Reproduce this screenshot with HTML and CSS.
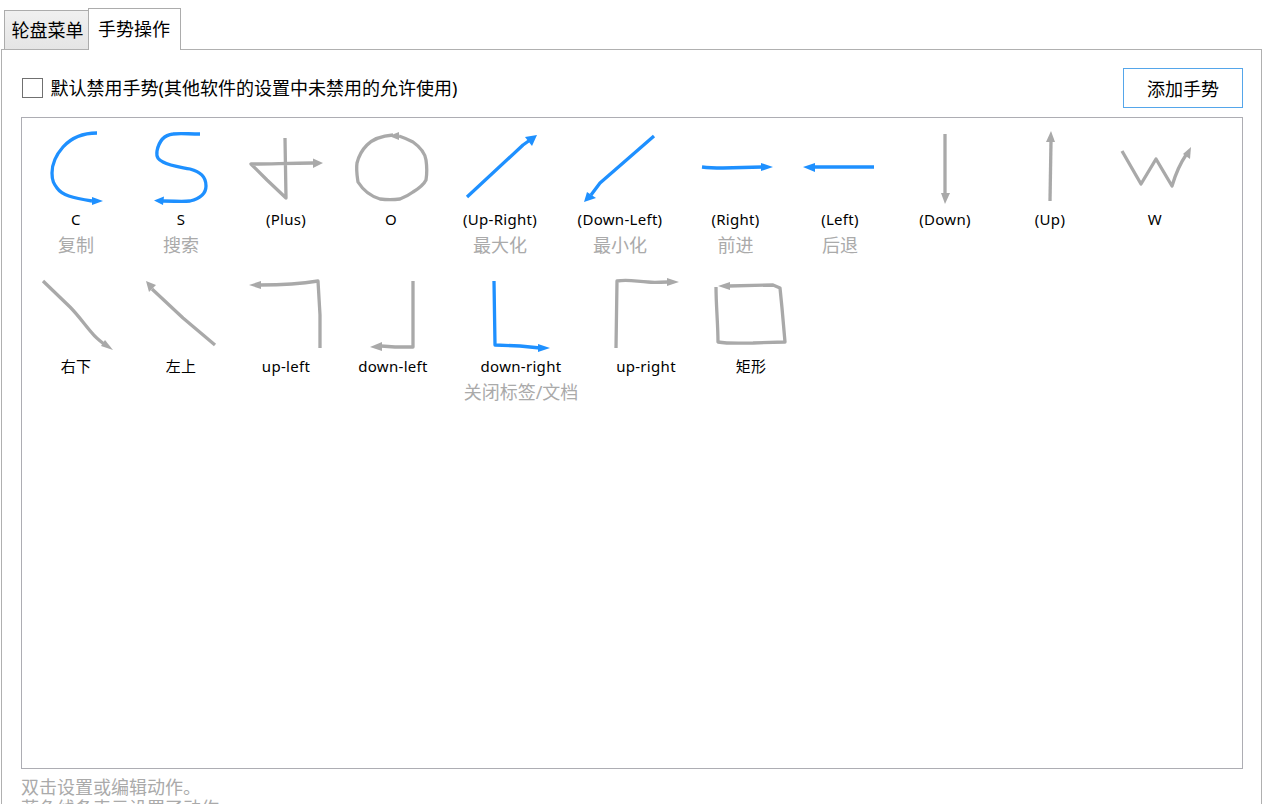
FILE: index.html
```html
<!DOCTYPE html>
<html lang="zh-CN">
<head>
  <meta charset="UTF-8" />
  <title>手势操作</title>
  <link rel="stylesheet" href="styles.css">
</head>
<body>
  <div class="tabs">
    <div class="tab">轮盘菜单</div>
    <div class="tab active">手势操作</div>
  </div>

  <div class="panel">
    <div class="toolbar">
      <label class="check"><input type="checkbox" />默认禁用手势(其他软件的设置中未禁用的允许使用)</label>
      <button class="add-btn">添加手势</button>
    </div>

    <div class="gesture-list">
      <!-- row 1 -->
      <div class="gesture">
        <svg class="stroke on" viewBox="26 124 100 84"><path d="M97 133C84 133 72 137 63 147C56 155 52 165 52 173C52 181 54 184 57 188C62 195 72 198 92 201"/><polygon points="103,201 92,197 92,205"/></svg>
        <div class="name">C</div><div class="action">复制</div>
      </div>
      <div class="gesture">
        <svg class="stroke on" viewBox="131 124 100 84"><path d="M200 134C188 134 180 133 173 134C164 135 159 141 157 151C156 158 159 160 163 162C170 166 180 167 190 169C200 172 206 176 206 186C206 193 202 198 190 201C182 202 175 201 163 201"/><polygon points="154,200.5 164,196.5 163,205"/></svg>
        <div class="name">S</div><div class="action">搜索</div>
      </div>
      <div class="gesture">
        <svg class="stroke" viewBox="236 124 100 84"><path d="M285 138L286 198L267 180L251 164C270 164 290 163 313 163"/><polygon points="323,163 313,158.5 313,168"/></svg>
        <div class="name">(Plus)</div>
      </div>
      <div class="gesture">
        <svg class="stroke" viewBox="341 124 100 84"><path d="M399 136C405 138 409 140 413 142C420 147 425 153 426 160C427 167 427 174 426 180C423 186 418 189 413 192C409 195 405 197 400 199C393 200 387 200 380 199C370 196 363 190 358 182C357 175 356 170 357 163C359 155 362 150 367 145C372 140 380 136 393 135"/><polygon points="389,136 399,132 399,140"/></svg>
        <div class="name">O</div>
      </div>
      <div class="gesture w113">
        <svg class="stroke on" viewBox="450 124 100 84"><path d="M467 197L523 145L530 140"/><polygon points="537,135 525,137 532,146"/></svg>
        <div class="name">(Up-Right)</div><div class="action">最大化</div>
      </div>
      <div class="gesture w127">
        <svg class="stroke on" viewBox="570 124 100 84"><path d="M654 136L600 183L591 195"/><polygon points="584,202 587,192 596,198"/></svg>
        <div class="name">(Down-Left)</div><div class="action">最小化</div>
      </div>
      <div class="gesture w104">
        <svg class="stroke on" viewBox="686 124 100 84"><path d="M702 167C710 168 716 168 723 168L762 167"/><polygon points="773,167 761,163 761,171"/></svg>
        <div class="name">(Right)</div><div class="action">前进</div>
      </div>
      <div class="gesture">
        <svg class="stroke on" viewBox="790 124 100 84"><path d="M874 167L814 167"/><polygon points="803,167 815,163 815,172"/></svg>
        <div class="name">(Left)</div><div class="action">后退</div>
      </div>
      <div class="gesture">
        <svg class="stroke" viewBox="895 124 100 84"><path d="M945 134L945 194"/><polygon points="945,204 941,193 950,193"/></svg>
        <div class="name">(Down)</div>
      </div>
      <div class="gesture">
        <svg class="stroke" viewBox="1000 124 100 84"><path d="M1050 201L1051 141"/><polygon points="1051,131 1046,142 1055,142"/></svg>
        <div class="name">(Up)</div>
      </div>
      <div class="gesture">
        <svg class="stroke" viewBox="1105 124 100 84"><path d="M1122 151L1141 184L1156 159L1172 186C1175 176 1179 165 1186 155"/><polygon points="1191,147 1183,154 1190,159"/></svg>
        <div class="name">W</div>
      </div>

      <!-- row 2 -->
      <div class="gesture">
        <svg class="stroke" viewBox="26 271 100 84"><path d="M43 281L70 307C78 315 85 325 92 333C96 338 100 341 104 344"/><polygon points="113,350 105,340 101,346"/></svg>
        <div class="name">右下</div>
      </div>
      <div class="gesture">
        <svg class="stroke" viewBox="131 271 100 84"><path d="M215 345L183 318L152 289"/><polygon points="146,281 156,285 149,292"/></svg>
        <div class="name">左上</div>
      </div>
      <div class="gesture">
        <svg class="stroke" viewBox="236 271 100 84"><path d="M320 348L320 315L318 281C300 284 280 285 260 285"/><polygon points="249,285 261,281 261,289"/></svg>
        <div class="name">up-left</div>
      </div>
      <div class="gesture w109">
        <svg class="stroke" viewBox="343 271 100 84"><path d="M413 281L413 347L395 347L381 346"/><polygon points="370,347 382,342 382,351"/></svg>
        <div class="name">down-left</div>
      </div>
      <div class="gesture w147">
        <svg class="stroke on" viewBox="471 271 100 84"><path d="M494 281L495 345L520 346L540 348"/><polygon points="550,348 538,344 538,352"/></svg>
        <div class="name">down-right</div><div class="action">关闭标签/文档</div>
      </div>
      <div class="gesture w103">
        <svg class="stroke" viewBox="596 271 100 84"><path d="M616 348L617 281C630 279 638 282 648 282C655 283 660 282 668 282"/><polygon points="679,282 667,278 667,286"/></svg>
        <div class="name">up-right</div>
      </div>
      <div class="gesture w107">
        <svg class="stroke" viewBox="701 271 100 84"><path d="M716 287C716 305 718 325 718 342C730 344 745 343 753 343L785 342L782 308L780 288L773 285L729 286"/><polygon points="718,286 730,282 730,290"/></svg>
        <div class="name">矩形</div>
      </div>
    </div>

    <p class="hint">双击设置或编辑动作。<br>蓝色线条表示设置了动作。</p>
  </div>
</body>
</html>
```

FILE: styles.css
```css
html, body {
  height: 804px;
  overflow: hidden;
}

body {
  margin: 0;
  padding: 8px 0 0 1px;
  background-color: #fff;
  color: #000;
  font-family: "Noto Sans", "Noto Sans CJK SC", sans-serif;
}

.tabs {
  display: flex;
  align-items: flex-end;
  margin-left: 3px;
  height: 41px;
}

.tab {
  box-sizing: border-box;
  width: 85px;
  height: 39px;
  padding-left: 2px;
  border: 1px solid #acacac;
  border-bottom: none;
  background: linear-gradient(#f0f0f0, #e5e5e5);
  font-size: 18px;
  line-height: 38px;
  text-align: center;
}

.tab.active {
  position: relative;
  width: 93px;
  height: 42px;
  margin-left: -1px;
  margin-bottom: -1px;
  padding: 0 1px 0 0;
  background: #fff;
  line-height: 40px;
}

.panel {
  box-sizing: border-box;
  width: 1261px;
  height: 800px;
  padding: 18px 18px 0 19px;
  border: 1px solid #b0b0b0;
}

.toolbar {
  display: flex;
  justify-content: space-between;
  align-items: flex-start;
  height: 40px;
}

.check {
  display: flex;
  align-items: center;
  margin-top: 9px;
  margin-left: 1px;
  font-size: 18px;
  line-height: 22px;
}

.check input {
  appearance: none;
  box-sizing: border-box;
  width: 21px;
  height: 20px;
  margin: 0 7.5px 0 0;
  border: 1px solid #707070;
  background: #fff;
}

.add-btn {
  box-sizing: border-box;
  width: 120px;
  height: 40px;
  border: 1px solid #55a6ea;
  background: #fff;
  font-family: inherit;
  font-size: 18px;
  padding: 0;
}

.gesture-list {
  box-sizing: border-box;
  display: flex;
  flex-wrap: wrap;
  align-content: flex-start;
  height: 652px;
  margin-top: 9px;
  padding: 6px 0 0 1.5px;
  border: 1px solid #adadb3;
}

.gesture {
  display: flex;
  flex-direction: column;
  align-items: center;
  width: 105px;
  height: 147px;
}

.gesture.w103 { width: 103px; }
.gesture.w104 { width: 104px; }
.gesture.w107 { width: 107px; }
.gesture.w109 { width: 109px; }
.gesture.w113 { width: 113px; }
.gesture.w127 { width: 127px; }
.gesture.w147 { width: 147px; }

.stroke {
  flex: none;
  width: 100px;
  height: 84px;
  fill: #a9a9a9;
}

.stroke path {
  fill: none;
  stroke: #a9a9a9;
  stroke-width: 3.3;
  stroke-linejoin: round;
}

.stroke.on {
  fill: #1e90ff;
}

.stroke.on path {
  stroke: #1e90ff;
}

.name {
  font-size: 15px;
  letter-spacing: 0.3px;
  line-height: 22px;
  white-space: nowrap;
}

.action {
  margin-top: 3px;
  color: #aaa;
  font-size: 18px;
  line-height: 24px;
  white-space: nowrap;
}

.hint {
  margin: 8px 0 0;
  color: #aaa;
  font-size: 18px;
  line-height: 21px;
}
```
